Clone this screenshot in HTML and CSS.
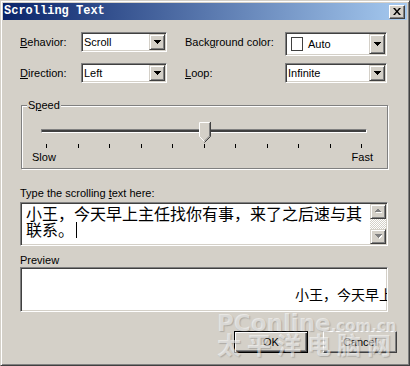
FILE: index.html
```html
<!DOCTYPE html>
<html>
<head>
<meta charset="utf-8">
<link rel="stylesheet" href="styles.css">
</head>
<body>
<div class="window">
  <div class="titlebar">
    <span class="title">Scrolling Text</span>
    <span class="close"><svg width="8" height="7" viewBox="0 0 8 7"><path d="M0 0h2l2 2.5L6 0h2L5 3.5 8 7H6L4 4.5 2 7H0l3-3.5z" fill="#000"/></svg></span>
  </div>
  <div class="content">
    <div class="fields">
      <span class="lbl"><u>B</u>ehavior:</span>
      <div class="select"><span class="val">Scroll</span><span class="drop"><svg width="7" height="4" viewBox="0 0 7 4"><path d="M0 0h7v1H0zM1 1h5v1H1zM2 2h3v1H2zM3 3h1v1H3z" fill="#000"/></svg></span></div>
      <span class="lbl lbl2">Back<u>g</u>round color:</span>
      <div class="select tall"><span class="swatch"></span><span class="val">Auto</span><span class="drop"><svg width="7" height="4" viewBox="0 0 7 4"><path d="M0 0h7v1H0zM1 1h5v1H1zM2 2h3v1H2zM3 3h1v1H3z" fill="#000"/></svg></span></div>
      <span class="lbl"><u>D</u>irection:</span>
      <div class="select"><span class="val">Left</span><span class="drop"><svg width="7" height="4" viewBox="0 0 7 4"><path d="M0 0h7v1H0zM1 1h5v1H1zM2 2h3v1H2zM3 3h1v1H3z" fill="#000"/></svg></span></div>
      <span class="lbl lbl2"><u>L</u>oop:</span>
      <div class="select"><span class="val">Infinite</span><span class="drop"><svg width="7" height="4" viewBox="0 0 7 4"><path d="M0 0h7v1H0zM1 1h5v1H1zM2 2h3v1H2zM3 3h1v1H3z" fill="#000"/></svg></span></div>
    </div>

    <fieldset class="speed">
      <legend>S<u>p</u>eed</legend>
      <div class="slider">
        <div class="track"></div>
        <div class="ticks">
          <i></i><i></i><i></i><i></i><i></i><i></i><i></i><i></i><i></i><i></i><i></i>
        </div>
        <svg class="thumb" width="12" height="21" viewBox="0 0 12 21">
          <path d="M0 0H11V14L5.5 19.5L0 14Z" fill="#d4d0c8"/>
          <path d="M0.5 14.5V0.5H10.5" stroke="#fff" fill="none"/>
          <path d="M0.5 14.5L5 19" stroke="#fff" fill="none"/>
          <path d="M11.5 0V14.5L5.5 20.5" stroke="#404040" fill="none"/>
          <path d="M10.5 1V14L5.5 19" stroke="#808080" fill="none"/>
        </svg>
      </div>
      <div class="scale"><span>Slow</span><span>Fast</span></div>
    </fieldset>

    <div class="caption">Type the scrolling <u>t</u>ext here:</div>
    <div class="textbox">
      <div class="text">小王，今天早上主任找你有事，来了之后速与其联系。<span class="caret"></span></div>
      <div class="vscroll">
        <span class="sbtn"><svg width="7" height="5" viewBox="0 0 7 5"><path d="M4 1h1v1h1v1h1v1H1V3h1V2h1V1z" fill="#fff"/><path d="M3 0h1v1h1v1h1v1H0V2h1V1h1V0z" fill="#808080"/></svg></span>
        <span class="strack"></span>
        <span class="sbtn"><svg width="7" height="5" viewBox="0 0 7 5"><path d="M1 1h7v1H7v1H6v1H5v1H4V4H3V3H2V2H1z" fill="#fff"/><path d="M0 0h7v1H6v1H5v1H4v1H3V3H2V2H1V1H0z" fill="#808080"/></svg></span>
      </div>
    </div>

    <div class="caption preview-cap">Preview</div>
    <div class="preview"><span class="ptext">小王，今天早上</span></div>

    <div class="buttons">
      <button class="btn default">OK</button>
      <button class="btn">Cancel</button>
    </div>
  </div>
  <div class="watermark">
    <div class="wm1">PConline<span>.com.cn</span></div>
    <div class="wm2">太平洋电脑网</div>
  </div>
</div>
</body>
</html>
```

FILE: styles.css
```css
html, body {
  margin: 0;
  padding: 0;
  background: #d4d0c8;
}

.window {
  position: relative;
  width: 410px;
  height: 366px;
  box-sizing: border-box;
  padding: 2px;
  background: #d4d0c8;
  border: 1px solid;
  border-color: #d4d0c8 #404040 #404040 #d4d0c8;
  box-shadow: inset 1px 1px #fff, inset -1px -1px #808080;
  font-family: "Liberation Sans", Arial, sans-serif;
  font-size: 11px;
  color: #000;
  overflow: hidden;
}

.titlebar {
  display: flex;
  align-items: center;
  height: 17px;
  background: linear-gradient(to right, #0a246a, #a6caf0);
}

.title {
  padding-left: 1px;
  font-family: "Liberation Mono", "DejaVu Sans Mono", monospace;
  font-weight: bold;
  font-size: 12px;
  line-height: 17px;
  color: #fff;
}

.close {
  margin-left: auto;
  margin-right: 2px;
  width: 16px;
  height: 14px;
  box-sizing: border-box;
  display: flex;
  align-items: center;
  justify-content: center;
  background: #d4d0c8;
  border: 1px solid;
  border-color: #fff #404040 #404040 #fff;
  box-shadow: inset -1px -1px #808080;
}

.content {
  padding: 12px 19px 0 17px;
}

.fields {
  display: grid;
  grid-template-columns: 61px 86px 118px 102px;
  grid-template-rows: 24px 20px;
  row-gap: 7px;
  align-items: start;
}

.lbl {
  line-height: 21px;
}

.lbl2 {
  padding-left: 18px;
}

.select {
  display: flex;
  height: 20px;
  box-sizing: border-box;
  padding: 1px;
  background: #fff;
  border: 1px solid;
  border-color: #808080 #fff #fff #808080;
  box-shadow: inset 1px 1px #404040, inset -1px -1px #d4d0c8;
}

.select.tall {
  height: 24px;
  align-items: center;
}

.val {
  flex: 1;
  padding-left: 1px;
  line-height: 16px;
  white-space: nowrap;
}

.swatch {
  width: 12px;
  height: 14px;
  box-sizing: border-box;
  margin: 0 4px 0 4px;
  border: 1px solid #404040;
  background: #fff;
}

.drop {
  width: 16px;
  align-self: stretch;
  box-sizing: border-box;
  display: flex;
  align-items: center;
  justify-content: center;
  background: #d4d0c8;
  border: 1px solid;
  border-color: #d4d0c8 #404040 #404040 #d4d0c8;
  box-shadow: inset 1px 1px #fff, inset -1px -1px #808080;
}

.speed {
  margin: 15px 0 0 1px;
  padding: 0 0 4px 0;
  width: 367px;
  box-sizing: border-box;
  min-inline-size: 0;
  border: 1px solid #808080;
  box-shadow: inset 1px 1px #fff, 1px 1px #fff;
}

.speed legend {
  margin-left: 5px;
  padding: 0 1px;
  line-height: 14px;
  background: #d4d0c8;
}

.slider {
  position: relative;
  margin: 0 20px 0 19px;
  padding-top: 17px;
}

.track {
  height: 2px;
  background: #404040;
  border-top: 1px solid #808080;
  border-left: 1px solid #808080;
  border-bottom: 1px solid #fff;
  border-right: 1px solid #fff;
}

.ticks {
  display: flex;
  justify-content: space-between;
  padding: 0 5px;
  margin-top: 11px;
}

.ticks i {
  display: block;
  width: 1px;
  height: 4px;
  background: #000;
}

.thumb {
  position: absolute;
  left: 158px;
  top: 10px;
}

.scale {
  display: flex;
  justify-content: space-between;
  margin-top: 2px;
  padding: 0 14px 0 10px;
  line-height: 14px;
}

.caption {
  margin-top: 17px;
  margin-bottom: 2px;
  line-height: 14px;
}

.preview-cap {
  margin-top: 7px;
  margin-bottom: 0;
}

.textbox,
.preview {
  display: flex;
  box-sizing: border-box;
  padding: 1px;
  background: #fff;
  border: 1px solid;
  border-color: #808080 #fff #fff #808080;
  box-shadow: inset 1px 1px #404040, inset -1px -1px #d4d0c8;
  font-family: "Noto Sans CJK SC", sans-serif;
  font-size: 16px;
  line-height: 16px;
}

.textbox {
  height: 44px;
}

.text {
  flex: 1;
  padding: 1px 4px 0 4px;
}

.caret {
  display: inline-block;
  width: 1px;
  height: 16px;
  margin-left: 2px;
  background: #000;
  vertical-align: -2px;
}

.vscroll {
  width: 16px;
  display: flex;
  flex-direction: column;
}

.sbtn {
  height: 15px;
  box-sizing: border-box;
  display: flex;
  align-items: center;
  justify-content: center;
  background: #d4d0c8;
  border: 1px solid;
  border-color: #d4d0c8 #404040 #404040 #d4d0c8;
  box-shadow: inset 1px 1px #fff, inset -1px -1px #808080;
}

.strack {
  flex: 1;
  background: repeating-conic-gradient(#fff 0 25%, #d4d0c8 0 50%) 0 0 / 2px 2px;
}

.preview {
  height: 45px;
  overflow: hidden;
  white-space: nowrap;
  font-size: 14px;
}

.ptext {
  padding: 17px 0 0 273px;
}

.buttons {
  display: flex;
  justify-content: flex-end;
  gap: 15px;
  margin-top: 19px;
  margin-right: -9px;
}

.btn {
  width: 74px;
  height: 22px;
  box-sizing: border-box;
  padding: 0;
  background: #d4d0c8;
  border: 1px solid;
  border-color: #fff #404040 #404040 #fff;
  box-shadow: inset -1px -1px #808080;
  font-family: "Liberation Sans", Arial, sans-serif;
  font-size: 11px;
  color: #000;
}

.btn.default {
  border: 1px solid #000;
  box-shadow: inset 1px 1px #fff, inset -1px -1px #404040, inset -2px -2px #808080;
}

.watermark {
  position: absolute;
  left: 216px;
  top: 309px;
  width: 185px;
  color: rgba(255, 255, 255, 0.55);
  text-shadow: 1px 1px 1px rgba(90, 90, 90, 0.3);
  pointer-events: none;
}

.wm1 {
  font-family: "DejaVu Sans", sans-serif;
  font-weight: bold;
  font-size: 23px;
  line-height: 26px;
  white-space: nowrap;
}

.wm1 span {
  font-size: 15px;
}

.wm2 {
  margin-top: -8px;
  font-family: "Noto Sans CJK SC", sans-serif;
  font-weight: bold;
  font-size: 24px;
  line-height: 26px;
  letter-spacing: 6px;
  white-space: nowrap;
}
```
